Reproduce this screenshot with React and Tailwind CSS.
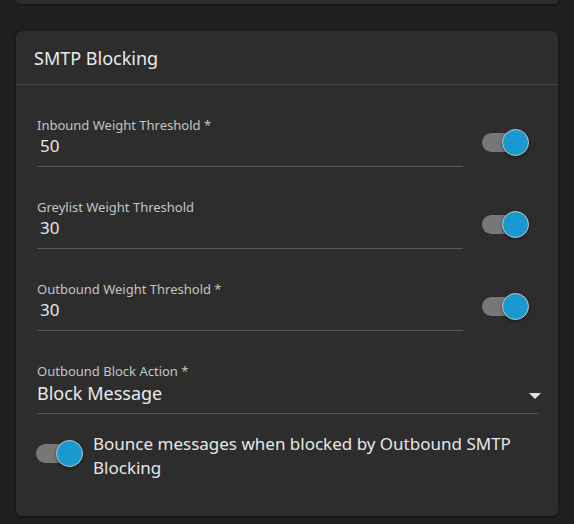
import React, { useState } from "react";

function Toggle({ on, onClick }) {
  return (
    <button
      type="button"
      onClick={onClick}
      className="relative h-[26px] w-[47px] shrink-0"
    >
      <span className="absolute left-0 top-[4px] h-[19px] w-[34px] rounded-full bg-[#777777]" />
      <span
        className={
          "absolute top-0 h-[27px] w-[27px] rounded-full border border-[#c8c8c8] shadow-[0_1px_3px_rgba(0,0,0,0.5)] " +
          (on ? "left-[20px] bg-[#1a98d0]" : "left-0 bg-[#eeeeee]")
        }
      />
    </button>
  );
}

function NumberField({ label, value, on, onToggle }) {
  return (
    <div className="flex items-center">
      <div className="w-[426px] border-b border-[#555555] pb-[8px]">
        <div className="text-[13px] leading-[16px] text-[#c4c4c4]">{label}</div>
        <div className="pl-[3px] text-[17px] leading-[25px] text-[#e6e6e6]">{value}</div>
      </div>
      <div className="ml-[19px] mt-[6px]">
        <Toggle on={on} onClick={onToggle} />
      </div>
    </div>
  );
}

export default function App() {
  const [toggles, setToggles] = useState([true, true, true, true]);
  const flip = (i) => setToggles((t) => t.map((v, j) => (j === i ? !v : v)));

  return (
    <div
      className="min-h-[524px] bg-[#1f1f1f] px-[16px] pb-[9px]"
      style={{ fontFamily: '"Noto Sans", "Open Sans", sans-serif' }}
    >
      {/* previous card */}
      <div className="h-[4px] rounded-b-md bg-[#2d2d2d] shadow-[0_1px_2px_rgba(0,0,0,0.4)]" />

      <div className="mt-[27px] rounded-md bg-[#2d2d2d] shadow-[0_1px_3px_rgba(0,0,0,0.5)]">
        <div className="flex h-[54px] items-center border-b border-[#444444] px-[18px] pt-[1px] text-[18px] text-[#eaeaea]">
          SMTP Blocking
        </div>

        <div className="flex flex-col gap-[32px] pl-[21px] pr-[20px] pt-[32px] pb-[36px]">
          <NumberField label="Inbound Weight Threshold *" value="50" on={toggles[0]} onToggle={() => flip(0)} />
          <NumberField label="Greylist Weight Threshold" value="30" on={toggles[1]} onToggle={() => flip(1)} />
          <NumberField label="Outbound Weight Threshold *" value="30" on={toggles[2]} onToggle={() => flip(2)} />

          <div>
            <div className="border-b border-[#555555] pb-[6px]">
              <div className="text-[13px] leading-[16px] text-[#c4c4c4]">Outbound Block Action *</div>
              <div className="flex items-center justify-between">
                <span className="text-[18px] leading-[28px] text-[#eaeaea]">Block Message</span>
                <span className="mr-[-3px] mt-[6px] h-0 w-0 border-x-[6px] border-t-[6px] border-x-transparent border-t-[#e0e0e0]" />
              </div>
            </div>

            <div className="mt-[18px] flex items-center gap-[10px]">
              <div className="ml-[-1px]">
                <Toggle on={toggles[3]} onClick={() => flip(3)} />
              </div>
              <div className="text-[17px] leading-[24px] text-[#e6e6e6]">
                Bounce messages when blocked by Outbound SMTP Blocking
              </div>
            </div>
          </div>
        </div>
      </div>
    </div>
  );
}
